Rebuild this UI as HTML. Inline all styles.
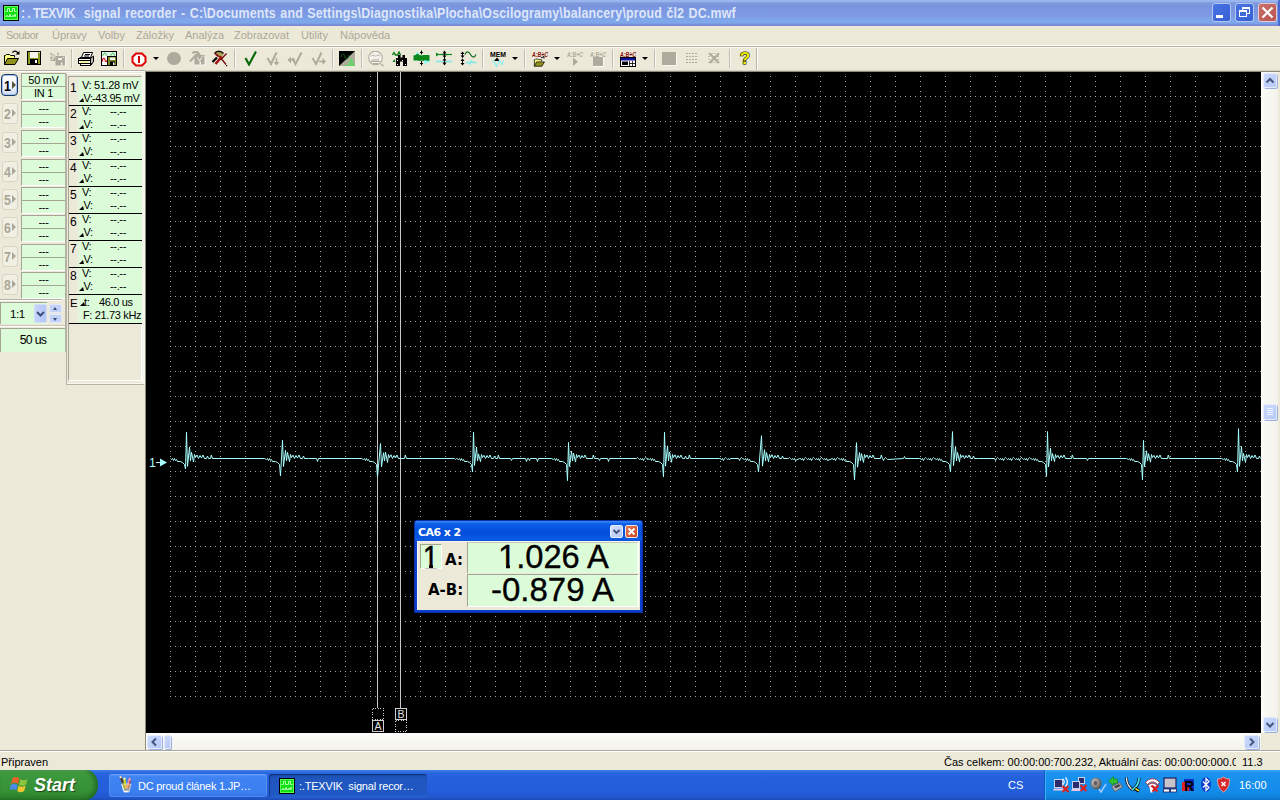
<!DOCTYPE html>
<html lang="cs">
<head>
<meta charset="utf-8">
<title>TEXVIK signal recorder</title>
<style>
html,body{margin:0;padding:0;}
body{width:1280px;height:800px;overflow:hidden;position:relative;background:#ece9d8;font-family:"Liberation Sans","DejaVu Sans",sans-serif;font-size:11px;color:#000;}
div,span{box-sizing:border-box;}
.a{position:absolute;}
#titlebar{position:absolute;left:0;top:0;width:1280px;height:26px;background:linear-gradient(to bottom,#9ab7f1 0px,#98b4ef 1.5px,#7f9adb 3px,#7994dc 6px,#7b97e1 8px,#7c99e2 14px,#7ea2e6 18px,#7fa9ec 21px,#7ea7ea 23px,#7b8edc 24.5px,#7a86d4 26px);}
#title{position:absolute;left:21px;top:4px;font-weight:bold;font-size:14px;color:#dde6f9;white-space:nowrap;line-height:18px;transform:scaleX(0.89);transform-origin:0 0;word-spacing:0.9px;letter-spacing:0.16px;}
.menu{position:absolute;top:28px;font-size:11px;color:#aca899;white-space:nowrap;line-height:14px;}
#tbline1{position:absolute;left:0;top:46px;width:1280px;height:1px;background:#b4b1a2;}
#tbline2{position:absolute;left:0;top:45px;width:1280px;height:1px;background:#fff;box-shadow:0 2px 0 #f8f7f2;}
.sep{position:absolute;top:49px;width:1px;height:19px;background:#c5c2b2;}
.ico{position:absolute;top:50px;width:16px;height:16px;}
.dd{position:absolute;top:57px;width:0;height:0;border-left:3px solid transparent;border-right:3px solid transparent;border-top:3px solid #000;}
#scope{position:absolute;left:146px;top:72px;width:1115px;height:661px;background:#000;overflow:hidden;}
#statusbar{position:absolute;left:0;top:751px;width:1280px;height:19px;background:#ece9d8;}
#taskbar{position:absolute;left:0;top:770px;width:1280px;height:30px;background:linear-gradient(to bottom,#3d7fe6 0px,#2a66de 3px,#2560db 8px,#245edb 20px,#2258d0 27px,#1d4cb8 30px);}
.fld{position:absolute;left:21px;width:44px;height:13px;background:#dcfcd9;border-left:1px solid #a5a595;border-top:1px solid #a5a595;text-align:center;font-size:11px;line-height:12px;white-space:nowrap;letter-spacing:-0.3px;}
.chb{position:absolute;left:2px;width:16px;height:21px;border:1px solid #d8d5c6;border-radius:3px;background:#f0ede0;color:#aca899;font-weight:bold;font-size:14px;line-height:19px;letter-spacing:-1px;padding-left:0px;white-space:nowrap;overflow:hidden;}
.rd{position:absolute;left:69px;width:73px;height:26px;background:linear-gradient(to right,#ece9d8 0px,#ece9d8 7px,#dcfcd9 12px);border-bottom:1px solid #000;font-size:11px;white-space:nowrap;letter-spacing:-0.35px;}
.rd .n{position:absolute;left:1px;top:1px;font-size:12px;line-height:14px;}
.rd .l1{position:absolute;left:13px;top:-1px;line-height:13px;}
.rd .l2{position:absolute;left:14.5px;top:12px;line-height:13px;}
.rd .v1{position:absolute;left:34px;width:30px;top:-1px;line-height:13px;text-align:center;}
.rd .v2{position:absolute;left:34px;width:30px;top:12px;line-height:13px;text-align:center;}
.tri{position:absolute;width:0;height:0;border-left:4px solid transparent;border-right:1px solid transparent;border-bottom:4px solid #000;}
</style>
</head>
<body>
<div id="titlebar"></div>
<svg class="a" style="left:3px;top:5px" width="16" height="16" viewBox="0 0 16 16"><rect x="0.5" y="0.5" width="15" height="15" fill="#10e010" stroke="#000"/><rect x="1.5" y="1.5" width="13" height="13" fill="none" stroke="#60ff60" stroke-width="1"/><path d="M2.5 6.5h2v-3h2v3h3v-3h2v3h2M2.5 11.5h1v-1h1v1h2v-2h1v2h2v-1h1v1h1v-2h1v2" fill="none" stroke="#b0ffb0" stroke-width="1"/></svg>
<div id="title"><span style="letter-spacing:2.5px">:.</span><span style="letter-spacing:-0.6px">TEXVIK</span>&nbsp; signal recorder - C:\Documents and Settings\Diagnostika\Plocha\Oscilogramy\balancery\proud čl2 DC.mwf</div>
<div class="a" style="left:1212px;top:3px;width:19px;height:19px;border:1px solid #b4c6f2;border-radius:3px;background:linear-gradient(135deg,#4a74e2,#345fd4);"></div><div class="a" style="left:1235px;top:3px;width:19px;height:19px;border:1px solid #b4c6f2;border-radius:3px;background:linear-gradient(135deg,#4a74e2,#345fd4);"></div><div class="a" style="left:1258px;top:3px;width:19px;height:19px;border:1px solid #e8c8cc;border-radius:3px;background:linear-gradient(135deg,#c9706a,#b85652);"></div><div class="a" style="left:1216px;top:15px;width:7px;height:3px;background:#fff"></div><div class="a" style="left:1242px;top:7px;width:8px;height:7px;border:1px solid #fff;border-top-width:2px"></div><div class="a" style="left:1239px;top:10px;width:8px;height:7px;border:1px solid #fff;border-top-width:2px;background:#3f69da"></div><svg class="a" style="left:1258px;top:3px" width="19" height="19" viewBox="0 0 19 19"><path d="M4.500 4.500l10 10M14.500 4.500l-10 10" stroke="#fff" stroke-width="2.200" fill="none"/></svg>
<div class="a" style="left:1278px;top:0;width:2px;height:26px;background:#3e5fd0;opacity:0.800"></div><div class="menu" style="left:6px;letter-spacing:-0.5px">Soubor</div><div class="menu" style="left:52px">Úpravy</div><div class="menu" style="left:98px">Volby</div><div class="menu" style="left:136px">Záložky</div><div class="menu" style="left:185px">Analýza</div><div class="menu" style="left:234px">Zobrazovat</div><div class="menu" style="left:301px">Utility</div><div class="menu" style="left:340px">Nápověda</div>
<div id="tbline1"></div><div id="tbline2"></div>
<svg class="a" style="left:4px;top:50px" width="16" height="16" viewBox="0 0 16 16" ><path d="M8.500 2.500c1.500-2 4-2 5.500 0.500" fill="none" stroke="#000" stroke-width="1.300"/><path d="M11.500 4.500h4v-3.500z" fill="#000"/><g transform="translate(0,1) scale(1)"><path d="M0.5 13.5V4.5h1l1-1h3l1 1h4v2" fill="#ffff80" stroke="#000"/><path d="M0.5 13.5l3-6h11l-3.5 6z" fill="#90901c" stroke="#000"/></g></svg>
<svg class="a" style="left:27px;top:51px" width="14" height="14" viewBox="0 0 14 14" ><g transform="translate(0,0) scale(1)"><rect x="0.5" y="0.5" width="13" height="13" fill="#8a9a20" stroke="#000"/><rect x="3" y="1" width="8" height="6" fill="#f4f4ec"/><rect x="3" y="8" width="8" height="5" fill="#000"/><rect x="8" y="9" width="2" height="3" fill="#fff"/><rect x="12" y="1" width="1" height="1" fill="#fff"/></g></svg>
<svg class="a" style="left:50px;top:52px" width="16" height="14" viewBox="0 0 16 14" ><rect x="6.500" y="5" width="9.500" height="9.500" fill="#fbfaf5"/><rect x="5.500" y="4" width="9.500" height="9.500" fill="#aeab9d"/><rect x="8" y="6" width="4" height="2" fill="#f4f2ea"/><rect x="11" y="10.500" width="1.300" height="3" fill="#f4f2ea"/><rect x="13" y="5" width="1" height="1" fill="#f4f2ea"/><path d="M0.500 4.500h5v4.500h-5z" fill="#aeab9d"/><path d="M2 8l2-3.500" stroke="#f4f2ea" stroke-width="1.200"/><path d="M0 1l2 2h3" stroke="#aeab9d" stroke-width="1.200" fill="none"/><path d="M8 0.500v3" stroke="#aeab9d" stroke-width="1.300"/></svg>
<div class="a" style="left:71px;top:49px;width:1px;height:19px;background:#c2bfb0"></div><div class="a" style="left:72px;top:49px;width:1px;height:19px;background:#f8f7f1"></div>
<svg class="a" style="left:78px;top:52px" width="16" height="14" viewBox="0 0 16 14" ><path d="M5.500 0.500H14.500L12.500 5.500H3.500Z" fill="#fff" stroke="#000"/><path d="M7 2.500h5M6 4h5" stroke="#000" fill="none"/><path d="M12.500 6.500l3-2.500v6l-3 2.500z" fill="#b8b8b0" stroke="#000"/><path d="M1 6.500l2.500-1.500M12.500 6.500l1.500-1.500" stroke="#000"/><rect x="0.500" y="6.500" width="12" height="5" fill="#fff" stroke="#000"/><path d="M0.500 8.500h12" stroke="#000"/><rect x="2" y="9.300" width="9" height="1.400" fill="#eef088"/><rect x="2.500" y="11.500" width="10" height="2" fill="#fff" stroke="#000"/><path d="M12.500 13.500l2-2" stroke="#000"/></svg>
<svg class="a" style="left:101px;top:51px" width="16" height="15" viewBox="0 0 16 15" ><rect x="0.500" y="0.500" width="15" height="14" fill="#fff" stroke="#000"/><rect x="1" y="1" width="14" height="4" fill="#dff5df"/><path d="M2 4.500c0.500-3 3-3 3.500 0M10 4.500c0.500-3 3-3 3.500 0" fill="none" stroke="#20c040"/><path d="M1.500 10.500v-2c1.500-2 2.500-1 2.500 0.500s1.500 2.500 2.500 0" fill="none" stroke="#d81818" stroke-width="1.200"/><rect x="6.500" y="5.500" width="9" height="9" fill="#7c8a24" stroke="#000"/><rect x="9" y="6.500" width="5" height="2.500" fill="#f4f4ec"/><rect x="9" y="10.500" width="5" height="4" fill="#000"/><rect x="12" y="11.500" width="1.500" height="2.500" fill="#fff"/></svg>
<div class="a" style="left:123px;top:49px;width:1px;height:19px;background:#c2bfb0"></div><div class="a" style="left:124px;top:49px;width:1px;height:19px;background:#f8f7f1"></div>
<svg class="a" style="left:131px;top:52px" width="16" height="15" viewBox="0 0 16 15" ><path d="M5 1.500h6l3.500 3.500v5l-3.500 3.500h-6l-3.500-3.500v-5z" fill="#fff" stroke="#e00000" stroke-width="2"/><rect x="7" y="4" width="2" height="7" fill="#d00000"/></svg>
<div class="a" style="left:153px;top:57px;width:0;height:0;border-left:3px solid transparent;border-right:3px solid transparent;border-top:3px solid #000"></div>
<div class="a" style="left:167px;top:52px;width:14px;height:13px;border-radius:7px;background:#aeab9d"></div>
<svg class="a" style="left:189px;top:51px" width="17" height="15" viewBox="0 0 17 15" ><path d="M3.500 2.500c2-2.500 4.500-2.500 6.500 0.500l1 2" fill="none" stroke="#aeab9d" stroke-width="2.200"/><path d="M8.500 2.500l-7.500 8" stroke="#aeab9d" stroke-width="2"/><rect x="6.500" y="5" width="10" height="9.500" fill="#f8f7f1"/><rect x="5.500" y="4" width="10" height="9.500" fill="#aeab9d"/><path d="M8 5.500l2.500 3.500 2.500-3.500v1.500l-2.500 3.500-2.500-3.500z" fill="#f4f2ea"/><rect x="10.500" y="10.500" width="1.500" height="3" fill="#f4f2ea"/><rect x="13.500" y="5" width="1" height="1" fill="#f4f2ea"/></svg>
<svg class="a" style="left:211px;top:50px" width="17" height="17" viewBox="0 0 17 17" ><path d="M4 4c1-3 6-3.500 8.500-0.500l-1 3h-4z" fill="#a8a458"/><path d="M3.500 3.500c2-3 6.500-3 9 0" fill="none" stroke="#1a0a0a" stroke-width="1.400"/><path d="M4 3.500l3 2.500 4 1.500" fill="none" stroke="#8a1010" stroke-width="1.800"/><path d="M1.500 12l4.500-4.500" stroke="#0a0505" stroke-width="2.300"/><path d="M4.500 14l6-7" stroke="#a01212" stroke-width="2.600"/><path d="M15.500 3.500l-6 6.500" stroke="#700808" stroke-width="1.300"/><path d="M11 9.500l4 5" stroke="#700808" stroke-width="1.300"/><rect x="15" y="15" width="1.200" height="1.200" fill="#200"/></svg>
<div class="a" style="left:234px;top:49px;width:1px;height:19px;background:#c2bfb0"></div><div class="a" style="left:235px;top:49px;width:1px;height:19px;background:#f8f7f1"></div>
<svg class="a" style="left:244px;top:50px" width="14" height="16" viewBox="0 0 14 16" ><path d="M1.500 8l3.500 6.500L12 1.500" fill="none" stroke="#0a6a0a" stroke-width="2.200"/></svg>
<svg class="a" style="left:266px;top:50px" width="15" height="16" viewBox="0 0 15 16" ><path d="M1.500 8l3.500 6L10.500 2.500" fill="none" stroke="#aeab9d" stroke-width="2"/><path d="M10.500 8v5" stroke="#aeab9d" stroke-width="1.500"/><path d="M7.500 12h6l-3 3.500z" fill="#aeab9d"/></svg>
<svg class="a" style="left:287px;top:50px" width="16" height="16" viewBox="0 0 16 16" ><path d="M5.500 8l3 6L14.500 2.500" fill="none" stroke="#aeab9d" stroke-width="2"/><path d="M3 10h5" stroke="#aeab9d" stroke-width="1.500"/><path d="M4 6.500v7l-3.500-3.500z" fill="#aeab9d"/></svg>
<svg class="a" style="left:311px;top:50px" width="16" height="16" viewBox="0 0 16 16" ><path d="M1.500 8l3.500 6L10.500 2.500" fill="none" stroke="#aeab9d" stroke-width="2"/><path d="M8 11.500h4" stroke="#aeab9d" stroke-width="1.500"/><path d="M11.500 8v7l3.500-3.500z" fill="#aeab9d"/></svg>
<div class="a" style="left:332px;top:49px;width:1px;height:19px;background:#c2bfb0"></div><div class="a" style="left:333px;top:49px;width:1px;height:19px;background:#f8f7f1"></div>
<svg class="a" style="left:339px;top:51px" width="16" height="15" viewBox="0 0 16 15" ><rect x="0" y="0" width="16" height="15" fill="#b0ad9d"/><path d="M0 0h16L0 15z" fill="#000"/><path d="M8 15l4.500-9 3.500 9z" fill="#6fcf6f"/><path d="M2 6c1-4 3-4 4 0s3 2 4-2" fill="none" stroke="#1a6a1a"/><rect x="5" y="14" width="11" height="1.500" fill="#6fcf6f"/></svg>
<div class="a" style="left:361px;top:49px;width:1px;height:19px;background:#c2bfb0"></div><div class="a" style="left:362px;top:49px;width:1px;height:19px;background:#f8f7f1"></div>
<svg class="a" style="left:368px;top:51px" width="17" height="16" viewBox="0 0 17 16" ><circle cx="7.500" cy="7" r="6.800" fill="#f6f4ec" stroke="#aeab9d" stroke-width="1.100"/><path d="M3 5.500c1-2 2.500-2 3.500-0.500h2c1-1.500 2.500-1.500 3.500 0.500" fill="none" stroke="#aeab9d"/><path d="M4 10.500v-2M6 10.500v-3M8 10.500v-2.500M10 10.500v-3M3 10.500h9M5 12.500h5" stroke="#aeab9d" fill="none"/><path d="M13 13l2.500 2" stroke="#aeab9d" stroke-width="1.500"/></svg>
<svg class="a" style="left:392px;top:51px" width="16" height="16" viewBox="0 0 16 16" ><path d="M0.500 4l1.500-2.500 1.500 2.500h2l1.500-3 1.500 3" fill="none" stroke="#0a7a1a" stroke-width="1.400"/><path d="M0.500 11l2-3 1 3z" fill="#0a7a1a"/><path d="M6 4h2.500v2.500h2v-2.500h2.500v3h2v8h-4v-4.500h-3v4.500h-4v-8h2z" fill="#000"/><rect x="5" y="9" width="1" height="1" fill="#fff"/><rect x="10" y="9" width="1" height="1" fill="#fff"/><rect x="5" y="13" width="1" height="1" fill="#fff"/><rect x="13" y="13" width="1" height="1" fill="#fff"/></svg>
<svg class="a" style="left:413px;top:50px" width="17" height="16" viewBox="0 0 17 16" ><path d="M2 5l2.500-3.500 2 3.500z" fill="#8ff"/><path d="M10 10.500l2.500 4 2-2.500 2 1v-3z" fill="#8ff"/><path d="M0.500 5.500l2-0.500 2-1.500 2 1.500 2 0.500 2-0.500h6v5.500l-2 0.500-2-1-2 1-2-0.500-2 0.500-2-0.500h-4z" fill="#0a8a1a"/><path d="M8.5 0.500v4M8.5 11v4.500" stroke="#000" fill="none"/><path d="M7 2.500h3M7 13.500h3" stroke="#000" stroke-width="1.200"/></svg>
<svg class="a" style="left:436px;top:50px" width="17" height="16" viewBox="0 0 17 16" ><path d="M0 4.500h16" stroke="#0a8a1a" stroke-width="1.200"/><path d="M0 2.500l3 2-3 2z" fill="#0a8a1a"/><path d="M0 11.500h16" stroke="#7fe8e8" stroke-width="1.500"/><path d="M8.5 1v14" stroke="#000" fill="none"/><path d="M6.5 3.500l2-3 2 3zM6.5 5.500l2 2.500 2-2.500zM6.5 12.500l2 3 2-3zM6.5 10.500l2-2.500 2 2.500z" fill="#000"/></svg>
<svg class="a" style="left:460px;top:50px" width="17" height="16" viewBox="0 0 17 16" ><path d="M5 4.500c1.500-3.500 3.500-3.500 5.500 0s4 3.500 5.500 0" fill="none" stroke="#0a6a1a" stroke-width="1.200"/><path d="M5.500 12.500h3l1.500 1.500 1-3 1.500 1.500h4" fill="none" stroke="#7fe8e8" stroke-width="1.500"/><path d="M2.500 2v5.500M2.500 9v6" stroke="#000"/><path d="M0.500 4l2-2.500 2 2.500zM0.500 5.500l2 2.500 2-2.500zM0.500 11l2-2.500 2 2.500zM0.500 13l2 2.500 2-2.500z" fill="#000"/></svg>
<div class="a" style="left:482px;top:49px;width:1px;height:19px;background:#c2bfb0"></div><div class="a" style="left:483px;top:49px;width:1px;height:19px;background:#f8f7f1"></div>
<svg class="a" style="left:490px;top:51px" width="17" height="16" viewBox="0 0 17 16" ><text x="0" y="5.500" font-size="6.500" font-family="Liberation Sans,sans-serif" font-weight="bold" fill="#000" textLength="16" lengthAdjust="spacingAndGlyphs">MEM</text><path d="M4 10l3-3.500 3 3.500z" fill="#000"/><path d="M3 8.500l3.500 7 3-6 2.500 4 1.500-4" fill="none" stroke="#8fefef" stroke-width="1.300"/></svg>
<div class="a" style="left:512px;top:57px;width:0;height:0;border-left:3px solid transparent;border-right:3px solid transparent;border-top:3px solid #000"></div>
<div class="a" style="left:524px;top:49px;width:1px;height:19px;background:#c2bfb0"></div><div class="a" style="left:525px;top:49px;width:1px;height:19px;background:#f8f7f1"></div>
<svg class="a" style="left:532px;top:51px" width="17" height="16" viewBox="0 0 17 16" ><text x="0" y="5.5" font-size="6.5" font-family="Liberation Sans,sans-serif" font-weight="bold" fill="#8a1010" textLength="16" lengthAdjust="spacingAndGlyphs" font-style="italic">A:B+C</text><path d="M9 7l3-1.500M12 5.500v2" stroke="#000" fill="none"/><g transform="translate(2,5.5) scale(0.72)"><path d="M0.5 13.5V4.5h1l1-1h3l1 1h4v2" fill="#ffff80" stroke="#000"/><path d="M0.5 13.5l3-6h11l-3.5 6z" fill="#90901c" stroke="#000"/></g></svg>
<div class="a" style="left:554px;top:57px;width:0;height:0;border-left:3px solid transparent;border-right:3px solid transparent;border-top:3px solid #000"></div>
<svg class="a" style="left:567px;top:51px" width="17" height="16" viewBox="0 0 17 16" ><text x="0" y="5.5" font-size="6.5" font-family="Liberation Sans,sans-serif" font-weight="bold" fill="#aeab9d" textLength="16" lengthAdjust="spacingAndGlyphs" font-style="italic">A:B+C</text><path d="M6 6.500v8.500l5-4.200z" fill="#aeab9d"/></svg>
<svg class="a" style="left:590px;top:51px" width="17" height="16" viewBox="0 0 17 16" ><text x="0" y="5.5" font-size="6.5" font-family="Liberation Sans,sans-serif" font-weight="bold" fill="#aeab9d" textLength="16" lengthAdjust="spacingAndGlyphs" font-style="italic">A:B+C</text><rect x="3" y="6" width="10" height="9" fill="#aeab9d"/><path d="M3.500 15.500h10v-9" stroke="#fbfaf5" fill="none"/></svg>
<div class="a" style="left:612px;top:49px;width:1px;height:19px;background:#c2bfb0"></div><div class="a" style="left:613px;top:49px;width:1px;height:19px;background:#f8f7f1"></div>
<svg class="a" style="left:620px;top:51px" width="17" height="16" viewBox="0 0 17 16" ><text x="0" y="5.5" font-size="6.5" font-family="Liberation Sans,sans-serif" font-weight="bold" fill="#8a1010" textLength="16" lengthAdjust="spacingAndGlyphs" font-style="italic">A:B+C</text><rect x="0.500" y="6.500" width="15" height="9" fill="#fff" stroke="#000"/><rect x="1" y="7" width="14" height="2.500" fill="#1010a0"/><rect x="2" y="10.500" width="6" height="3.500" fill="#000"/><path d="M9.500 10v5M12.500 10v5M9 12.500h6" stroke="#000" stroke-width="0.800"/></svg>
<div class="a" style="left:642px;top:57px;width:0;height:0;border-left:3px solid transparent;border-right:3px solid transparent;border-top:3px solid #000"></div>
<div class="a" style="left:654px;top:49px;width:1px;height:19px;background:#c2bfb0"></div><div class="a" style="left:655px;top:49px;width:1px;height:19px;background:#f8f7f1"></div>
<div class="a" style="left:662px;top:52px;width:14px;height:13px;background:#aeab9d;box-shadow:1px 1px 0 #fbfaf5"></div>
<svg class="a" style="left:686px;top:52px" width="13" height="13" viewBox="0 0 13 13" ><path d="M0 1.500h12M0 4.500h12M0 7.500h12M0 10.500h12" stroke="#aeab9d" stroke-dasharray="2 1" fill="none"/></svg>
<svg class="a" style="left:708px;top:52px" width="14" height="13" viewBox="0 0 14 13" ><path d="M0 1.500h12M0 10.500h12M0 4.500h12M0 7.500h12" stroke="#aeab9d" stroke-dasharray="2 1" fill="none" opacity="0.700"/><path d="M1.500 1.500l9.500 9.500M11 1.500l-9.500 9.500" stroke="#aeab9d" stroke-width="2"/></svg>
<div class="a" style="left:729px;top:49px;width:1px;height:19px;background:#c2bfb0"></div><div class="a" style="left:730px;top:49px;width:1px;height:19px;background:#f8f7f1"></div>
<svg class="a" style="left:739px;top:50px" width="12" height="16" viewBox="0 0 12 16" ><text x="6" y="14" text-anchor="middle" font-size="17" font-family="Liberation Sans,sans-serif" font-weight="bold" fill="#f0f000" stroke="#000" stroke-width="1.100" paint-order="stroke">?</text></svg>
<div class="a" style="left:756px;top:48px;width:1px;height:22px;background:#b9b6a6"></div><div class="a" style="left:757px;top:48px;width:1px;height:22px;background:#fff"></div>
<div class="a" style="left:0;top:72px;width:146px;height:679px;background:#ece9d8"></div>
<div class="a" style="left:1px;top:74px;width:17px;height:22px;border:1px solid #16386b;border-radius:4px;background:linear-gradient(to bottom,#ffffff 0%,#f4f7fc 50%,#cfdcf3 100%);box-shadow:inset 0 0 0 1px #a9c0e8;"></div>
<div class="a" style="left:4px;top:77px;font-weight:bold;font-size:15px;line-height:17px;color:#000;transform:scaleX(0.82);transform-origin:0 0;">1</div>
<div class="a" style="left:12px;top:81px;width:0;height:0;border-top:4px solid transparent;border-bottom:4px solid transparent;border-left:4px solid #55553a;"></div>
<div class="fld" style="top:73px">50 mV</div>
<div class="fld" style="top:86px;height:14px;border-bottom:1px solid #fff">IN 1</div>
<div class="a" style="left:2px;top:103px;width:16px;height:21px;border:1px solid #d9d6c8;border-radius:3px;background:#f1eee2;"></div>
<div class="a" style="left:4px;top:105px;font-weight:bold;font-size:15px;line-height:17px;color:#aba798;transform:scaleX(0.82);transform-origin:0 0;">2</div>
<div class="a" style="left:12px;top:109px;width:0;height:0;border-top:4px solid transparent;border-bottom:4px solid transparent;border-left:4px solid #aba798;"></div>
<div class="fld" style="top:101px">---</div>
<div class="fld" style="top:114px;height:14px;border-bottom:1px solid #fff">---</div>
<div class="a" style="left:2px;top:132px;width:16px;height:21px;border:1px solid #d9d6c8;border-radius:3px;background:#f1eee2;"></div>
<div class="a" style="left:4px;top:134px;font-weight:bold;font-size:15px;line-height:17px;color:#aba798;transform:scaleX(0.82);transform-origin:0 0;">3</div>
<div class="a" style="left:12px;top:138px;width:0;height:0;border-top:4px solid transparent;border-bottom:4px solid transparent;border-left:4px solid #aba798;"></div>
<div class="fld" style="top:130px">---</div>
<div class="fld" style="top:143px;height:14px;border-bottom:1px solid #fff">---</div>
<div class="a" style="left:2px;top:161px;width:16px;height:21px;border:1px solid #d9d6c8;border-radius:3px;background:#f1eee2;"></div>
<div class="a" style="left:4px;top:163px;font-weight:bold;font-size:15px;line-height:17px;color:#aba798;transform:scaleX(0.82);transform-origin:0 0;">4</div>
<div class="a" style="left:12px;top:167px;width:0;height:0;border-top:4px solid transparent;border-bottom:4px solid transparent;border-left:4px solid #aba798;"></div>
<div class="fld" style="top:159px">---</div>
<div class="fld" style="top:172px;height:14px;border-bottom:1px solid #fff">---</div>
<div class="a" style="left:2px;top:189px;width:16px;height:21px;border:1px solid #d9d6c8;border-radius:3px;background:#f1eee2;"></div>
<div class="a" style="left:4px;top:191px;font-weight:bold;font-size:15px;line-height:17px;color:#aba798;transform:scaleX(0.82);transform-origin:0 0;">5</div>
<div class="a" style="left:12px;top:195px;width:0;height:0;border-top:4px solid transparent;border-bottom:4px solid transparent;border-left:4px solid #aba798;"></div>
<div class="fld" style="top:187px">---</div>
<div class="fld" style="top:200px;height:14px;border-bottom:1px solid #fff">---</div>
<div class="a" style="left:2px;top:217px;width:16px;height:21px;border:1px solid #d9d6c8;border-radius:3px;background:#f1eee2;"></div>
<div class="a" style="left:4px;top:219px;font-weight:bold;font-size:15px;line-height:17px;color:#aba798;transform:scaleX(0.82);transform-origin:0 0;">6</div>
<div class="a" style="left:12px;top:223px;width:0;height:0;border-top:4px solid transparent;border-bottom:4px solid transparent;border-left:4px solid #aba798;"></div>
<div class="fld" style="top:215px">---</div>
<div class="fld" style="top:228px;height:14px;border-bottom:1px solid #fff">---</div>
<div class="a" style="left:2px;top:246px;width:16px;height:21px;border:1px solid #d9d6c8;border-radius:3px;background:#f1eee2;"></div>
<div class="a" style="left:4px;top:248px;font-weight:bold;font-size:15px;line-height:17px;color:#aba798;transform:scaleX(0.82);transform-origin:0 0;">7</div>
<div class="a" style="left:12px;top:252px;width:0;height:0;border-top:4px solid transparent;border-bottom:4px solid transparent;border-left:4px solid #aba798;"></div>
<div class="fld" style="top:244px">---</div>
<div class="fld" style="top:257px;height:14px;border-bottom:1px solid #fff">---</div>
<div class="a" style="left:2px;top:274px;width:16px;height:21px;border:1px solid #d9d6c8;border-radius:3px;background:#f1eee2;"></div>
<div class="a" style="left:4px;top:276px;font-weight:bold;font-size:15px;line-height:17px;color:#aba798;transform:scaleX(0.82);transform-origin:0 0;">8</div>
<div class="a" style="left:12px;top:280px;width:0;height:0;border-top:4px solid transparent;border-bottom:4px solid transparent;border-left:4px solid #aba798;"></div>
<div class="fld" style="top:272px">---</div>
<div class="fld" style="top:285px;height:14px;border-bottom:1px solid #fff">---</div>
<div class="a" style="left:65px;top:73px;width:1px;height:279px;background:#b5b3a3"></div>
<div class="a" style="left:0;top:299px;width:62px;height:1px;background:#b5b3a3"></div><div class="a" style="left:0;top:300px;width:62px;height:1px;background:#fff"></div>
<div class="a" style="left:0;top:302px;width:47px;height:22px;background:#dcfcd9;border-top:1px solid #a5a595;border-left:1px solid #a5a595;"></div>
<div class="a" style="left:10px;top:307px;font-size:11.5px;line-height:14px;letter-spacing:-0.4px;">1:1</div>
<div class="a" style="left:34px;top:304px;width:13px;height:19px;border-radius:2px;background:linear-gradient(to right,#c6d4fa,#b3c6f6);border:1px solid #d4defb;"></div>
<svg class="a" style="left:34px;top:304px" width="13" height="19" viewBox="0 0 13 19"><path d="M3 8l3.5 3.5L10 8" fill="none" stroke="#3b4f7e" stroke-width="2"/></svg>
<div class="a" style="left:49px;top:304px;width:13px;height:9px;border-radius:2px;background:#c3d2f9;border:1px solid #e2e9fc;"></div>
<div class="a" style="left:49px;top:314px;width:13px;height:9px;border-radius:2px;background:#c3d2f9;border:1px solid #e2e9fc;"></div>
<div class="a" style="left:53px;top:307px;width:0;height:0;border-left:2.5px solid transparent;border-right:2.5px solid transparent;border-bottom:3px solid #3b4f7e"></div>
<div class="a" style="left:53px;top:318px;width:0;height:0;border-left:2.5px solid transparent;border-right:2.5px solid transparent;border-top:3px solid #3b4f7e"></div>
<div class="a" style="left:0;top:325px;width:65px;height:1px;background:#c9c6b6"></div><div class="a" style="left:0;top:326px;width:65px;height:1px;background:#fff"></div>
<div class="a" style="left:0;top:328px;width:65px;height:24px;background:#dcfcd9;border-left:1px solid #a5a595;border-top:1px solid #a5a595;text-align:center;font-size:12.3px;line-height:23px;letter-spacing:-0.7px;">50 us</div>
<div class="a" style="left:66px;top:73px;width:79px;height:312px;border-left:1px solid #b5b3a3;border-top:1px solid #fff;border-right:1px solid #fff;border-bottom:1px solid #b5b3a3;box-shadow:inset 0 -1px 0 #f8f7f2"></div>
<div class="a" style="left:68px;top:76px;width:74px;height:305px;border-left:1px solid #a5a595;border-top:1px solid #a5a595;border-right:1px solid #fff;border-bottom:1px solid #fff;"></div>
<div class="a" style="left:142px;top:74px;width:3px;height:310px;background:#f6f5ee"></div>
<div class="rd" style="top:78px;height:28px"><span class="n" style="top:3px">1</span><span class="l1" style="top:1px">V:</span><span class="l2" style="top:14px">V:</span><span class="a" style="left:25px;top:1px;line-height:13px;">51.28 mV</span><span class="a" style="left:23px;top:14px;line-height:13px;">-43.95 mV</span><span class="tri" style="left:10px;top:20px"></span></div>
<div class="rd" style="top:106px;height:27px"><span class="n">2</span><span class="l1">V:</span><span class="l2">V:</span><span class="v1">--.--</span><span class="v2">--.--</span><span class="tri" style="left:10px;top:19px"></span></div>
<div class="rd" style="top:133px;height:27px"><span class="n">3</span><span class="l1">V:</span><span class="l2">V:</span><span class="v1">--.--</span><span class="v2">--.--</span><span class="tri" style="left:10px;top:19px"></span></div>
<div class="rd" style="top:160px;height:27px"><span class="n">4</span><span class="l1">V:</span><span class="l2">V:</span><span class="v1">--.--</span><span class="v2">--.--</span><span class="tri" style="left:10px;top:19px"></span></div>
<div class="rd" style="top:187px;height:27px"><span class="n">5</span><span class="l1">V:</span><span class="l2">V:</span><span class="v1">--.--</span><span class="v2">--.--</span><span class="tri" style="left:10px;top:19px"></span></div>
<div class="rd" style="top:214px;height:27px"><span class="n">6</span><span class="l1">V:</span><span class="l2">V:</span><span class="v1">--.--</span><span class="v2">--.--</span><span class="tri" style="left:10px;top:19px"></span></div>
<div class="rd" style="top:241px;height:27px"><span class="n">7</span><span class="l1">V:</span><span class="l2">V:</span><span class="v1">--.--</span><span class="v2">--.--</span><span class="tri" style="left:10px;top:19px"></span></div>
<div class="rd" style="top:268px;height:27px"><span class="n">8</span><span class="l1">V:</span><span class="l2">V:</span><span class="v1">--.--</span><span class="v2">--.--</span><span class="tri" style="left:10px;top:19px"></span></div>
<div class="rd" style="top:295px;height:29px"><span class="n" style="top:1px;font-size:11.5px">E</span><span class="a" style="left:30px;top:0px;line-height:14px;">46.0 us</span><span class="a" style="left:14px;top:13px;line-height:14px;">F: 21.73 kHz</span><span class="tri" style="left:11px;top:7px"></span><span class="a" style="left:15px;top:0px;line-height:14px;">t:</span></div>
<div class="a" style="left:0;top:70px;width:145px;height:1px;background:#b5b2a3"></div><div class="a" style="left:0;top:71px;width:145px;height:1px;background:#fff"></div><div class="a" style="left:145px;top:70px;width:1135px;height:1px;background:#d6d3c4"></div><div class="a" style="left:145px;top:71px;width:1px;height:680px;background:#8d8b7d"></div><div class="a" style="left:145px;top:71px;width:1135px;height:1px;background:#8d8b7d"></div><div id="scope"><svg class="a" style="left:0;top:0" width="1115" height="661" viewBox="146 72 1115 661" shape-rendering="crispEdges"><defs><pattern id="gd" x="170" y="96" width="25" height="25" patternUnits="userSpaceOnUse"><rect x="0" y="0" width="1" height="1" fill="#a6a6a6"/><rect x="5" y="0" width="1" height="1" fill="#a6a6a6"/><rect x="10" y="0" width="1" height="1" fill="#a6a6a6"/><rect x="15" y="0" width="1" height="1" fill="#a6a6a6"/><rect x="20" y="0" width="1" height="1" fill="#a6a6a6"/><rect x="0" y="5" width="1" height="1" fill="#a6a6a6"/><rect x="0" y="10" width="1" height="1" fill="#a6a6a6"/><rect x="0" y="15" width="1" height="1" fill="#a6a6a6"/><rect x="0" y="20" width="1" height="1" fill="#a6a6a6"/></pattern></defs><rect x="170" y="72" width="1091" height="625" fill="url(#gd)"/><rect x="377" y="72" width="1" height="636" fill="#c8c8c8"/><rect x="400" y="72" width="1" height="636" fill="#c8c8c8"/><polyline points="170.5,458.5 171.5,459.5 172.5,458.5 173.5,460.5 174.5,458.5 175.5,460.5 176.5,459.5 177.5,461.5 180.5,461.5 182.5,462.5 184.5,464.5 185.5,469.0 186.5,432.0 187.5,466.4 189.5,446.9 190.5,461.0 191.5,452.2 193.5,462.0 194.5,454.5 195.5,457.5 197.0,455.0 198.5,458.5 200.0,455.5 201.5,458.0 203.0,455.0 204.5,458.5 206.5,458.5 207.5,456.0 208.5,458.5 210.5,458.5 211.3,455.0 212.5,458.5 264.5,458.5 266.5,459.5 267.5,458.5 268.5,460.5 269.5,458.5 270.5,460.5 271.5,459.5 272.5,461.5 275.5,461.5 277.5,462.5 279.5,464.5 280.5,476.0 282.5,440.0 283.5,466.5 285.5,450.3 286.5,461.0 287.5,452.4 289.5,461.6 290.5,454.5 291.5,457.5 293.0,455.2 294.5,458.5 296.0,455.5 297.5,458.0 299.0,455.0 300.5,458.5 302.5,458.5 303.5,456.0 304.5,458.5 308.5,458.5 316.5,458.5 317.5,461.5 318.5,458.5 361.5,458.5 363.5,459.5 364.5,458.5 365.5,460.5 366.5,458.5 367.5,460.5 368.5,459.5 369.5,461.5 372.5,461.5 374.5,462.5 376.5,464.5 377.5,477.0 380.5,443.5 381.5,466.9 383.5,452.7 384.5,461.0 385.5,452.0 387.5,462.5 388.5,454.5 389.5,457.5 391.0,454.8 392.5,458.5 394.0,455.5 395.5,458.0 397.0,455.0 398.5,458.5 404.5,458.5 405.3,455.0 406.5,458.5 454.5,458.5 455.5,459.5 456.5,458.5 456.5,458.5 458.5,459.5 459.5,458.5 460.5,460.5 461.5,458.5 462.5,460.5 463.5,459.5 464.5,461.5 467.5,461.5 469.5,462.5 471.5,464.5 472.5,472.0 473.5,432.0 474.5,465.5 476.5,447.0 477.5,461.0 478.5,453.9 480.5,461.7 481.5,454.5 482.5,457.5 484.0,455.3 485.5,458.5 487.0,455.5 488.5,458.0 490.0,455.0 491.5,458.5 493.5,458.5 494.5,456.0 495.5,458.5 497.5,458.5 498.3,455.0 499.5,458.5 510.5,458.5 511.5,460.5 512.5,458.5 525.5,458.5 526.5,461.5 527.5,458.5 528.5,458.5 529.5,460.5 530.5,458.5 536.5,458.5 537.5,461.5 538.5,458.5 551.5,458.5 553.5,459.5 554.5,458.5 555.5,460.5 556.5,458.5 557.5,460.5 558.5,459.5 559.5,461.5 562.5,461.5 564.5,462.5 566.5,464.5 567.5,480.7 568.5,442.4 569.5,466.4 571.5,451.0 572.5,461.0 573.5,453.0 575.5,462.1 576.5,454.5 577.5,457.5 579.0,455.0 580.5,458.5 582.0,455.5 583.5,458.0 585.0,455.0 586.5,458.5 592.5,458.5 593.3,455.0 594.5,458.5 598.5,458.5 599.5,460.5 600.5,458.5 607.5,458.5 608.5,461.5 609.5,458.5 636.5,458.5 637.5,457.5 638.5,458.5 639.5,459.5 640.5,458.5 641.5,460.0 642.5,458.5 643.5,460.5 644.5,458.5 645.5,457.5 646.5,458.5 647.5,459.5 647.5,458.5 649.5,459.5 650.5,458.5 651.5,460.5 652.5,458.5 653.5,460.5 654.5,459.5 655.5,461.5 658.5,461.5 660.5,462.5 662.5,464.5 663.5,477.0 664.5,432.0 665.5,466.1 667.5,445.8 668.5,461.0 669.5,452.0 671.5,462.3 672.5,454.5 673.5,457.5 675.0,454.8 676.5,458.5 678.0,455.5 679.5,458.0 681.0,455.0 682.5,458.5 684.5,458.5 685.5,456.0 686.5,458.5 688.5,458.5 689.3,455.0 690.5,458.5 719.5,458.5 720.5,458.5 721.5,460.0 722.5,458.5 723.5,460.5 724.5,458.5 725.5,457.5 726.5,458.5 727.5,459.5 728.5,458.5 729.5,460.0 730.5,458.5 738.5,458.5 739.5,460.5 740.5,458.5 741.5,457.5 742.5,458.5 742.5,458.5 744.5,459.5 745.5,458.5 746.5,460.5 747.5,458.5 748.5,460.5 749.5,459.5 750.5,461.5 753.5,461.5 755.5,462.5 757.5,464.5 758.5,472.0 761.5,435.7 762.5,466.1 764.5,449.7 765.5,461.0 766.5,452.5 768.5,461.9 769.5,454.5 770.5,457.5 772.0,454.7 773.5,458.5 775.0,455.5 776.5,458.0 778.0,455.0 779.5,458.5 781.5,458.5 782.5,456.0 783.5,458.5 787.5,458.5 788.5,458.5 789.5,457.5 790.5,458.5 791.5,459.5 792.5,458.5 793.5,460.0 794.5,458.5 795.5,460.5 799.5,458.5 800.5,458.5 801.5,460.0 802.5,458.5 803.5,460.5 804.5,458.5 805.5,457.5 806.5,458.5 807.5,459.5 808.5,458.5 809.5,460.0 810.5,458.5 811.5,460.5 812.5,458.5 813.5,457.5 814.5,458.5 815.5,459.5 816.5,458.5 817.5,460.0 818.5,458.5 819.5,460.5 820.5,458.5 821.5,457.5 822.5,458.5 823.5,459.5 824.5,458.5 825.5,460.0 826.5,458.5 827.5,460.5 832.5,458.5 833.5,460.0 834.5,458.5 835.5,460.5 836.5,458.5 837.5,457.5 838.5,458.5 838.5,458.5 840.5,459.5 841.5,458.5 842.5,460.5 843.5,458.5 844.5,460.5 845.5,459.5 846.5,461.5 849.5,461.5 851.5,462.5 853.5,464.5 854.5,480.0 856.5,442.6 857.5,467.2 859.5,452.5 860.5,461.0 861.5,453.6 863.5,462.4 864.5,454.5 865.5,457.5 867.0,455.0 868.5,458.5 870.0,455.5 871.5,458.0 873.0,455.0 874.5,458.5 880.5,458.5 881.3,455.0 882.5,458.5 883.5,460.5 884.5,458.5 885.5,457.5 886.5,458.5 887.5,459.5 903.5,458.5 904.5,456.5 905.5,458.5 919.5,458.5 920.5,458.5 921.5,460.0 922.5,458.5 923.5,460.5 924.5,458.5 925.5,457.5 926.5,458.5 927.5,459.5 928.5,458.5 929.5,460.0 930.5,458.5 931.5,460.5 932.5,458.5 933.5,457.5 934.5,458.5 934.5,458.5 936.5,459.5 937.5,458.5 938.5,460.5 939.5,458.5 940.5,460.5 941.5,459.5 942.5,461.5 945.5,461.5 947.5,462.5 949.5,464.5 950.5,472.0 952.5,431.6 953.5,465.6 955.5,446.6 956.5,461.0 957.5,452.4 959.5,461.8 960.5,454.5 961.5,457.5 963.0,455.4 964.5,458.5 966.0,455.5 967.5,458.0 969.0,455.0 970.5,458.5 972.5,458.5 973.5,456.0 974.5,458.5 978.5,458.5 994.5,458.5 995.5,460.5 996.5,458.5 997.5,457.5 998.5,458.5 999.5,459.5 1000.5,458.5 1001.5,460.0 1002.5,458.5 1003.5,460.5 1004.5,458.5 1005.5,457.5 1006.5,458.5 1007.5,459.5 1008.5,458.5 1009.5,460.0 1010.5,458.5 1011.5,460.5 1012.5,458.5 1013.5,457.5 1014.5,458.5 1015.5,459.5 1016.5,458.5 1017.5,460.0 1018.5,458.5 1019.5,460.5 1020.5,458.5 1021.5,457.5 1022.5,458.5 1023.5,459.5 1024.5,458.5 1025.5,460.0 1026.5,458.5 1027.5,460.5 1028.5,458.5 1029.5,457.5 1030.5,458.5 1030.5,458.5 1032.5,459.5 1033.5,458.5 1034.5,460.5 1035.5,458.5 1036.5,460.5 1037.5,459.5 1038.5,461.5 1041.5,461.5 1043.5,462.5 1045.5,464.5 1046.5,476.4 1047.5,431.6 1048.5,467.0 1050.5,448.0 1051.5,461.0 1052.5,453.5 1054.5,461.6 1055.5,454.5 1056.5,457.5 1058.0,455.4 1059.5,458.5 1061.0,455.5 1062.5,458.0 1064.0,455.0 1065.5,458.5 1071.5,458.5 1072.3,455.0 1073.5,458.5 1086.5,458.5 1087.5,460.5 1088.5,458.5 1126.5,458.5 1128.5,459.5 1129.5,458.5 1130.5,460.5 1131.5,458.5 1132.5,460.5 1133.5,459.5 1134.5,461.5 1137.5,461.5 1139.5,462.5 1141.5,464.5 1142.5,480.0 1143.5,440.4 1144.5,466.6 1146.5,450.8 1147.5,461.0 1148.5,453.6 1150.5,462.2 1151.5,454.5 1152.5,457.5 1154.0,455.4 1155.5,458.5 1157.0,455.5 1158.5,458.0 1160.0,455.0 1161.5,458.5 1167.5,458.5 1168.3,455.0 1169.5,458.5 1221.5,458.5 1223.5,459.5 1224.5,458.5 1225.5,460.5 1226.5,458.5 1227.5,460.5 1228.5,459.5 1229.5,461.5 1232.5,461.5 1234.5,462.5 1236.5,464.5 1237.5,472.0 1238.5,428.7 1239.5,466.3 1241.5,446.5 1242.5,461.0 1243.5,453.5 1245.5,462.5 1246.5,454.5 1247.5,457.5 1249.0,454.7 1250.5,458.5 1252.0,455.5 1253.5,458.0 1255.0,455.0 1256.5,458.5 1258.5,458.5 1259.5,456.0 1260.5,458.5 1260.5,458.5" fill="none" stroke="#a8ffff" stroke-width="1" shape-rendering="auto"/><text x="149" y="467" font-family="Liberation Sans,sans-serif" font-size="12.5" fill="#a8ffff" shape-rendering="auto">1</text><rect x="156" y="462" width="5" height="1" fill="#a8ffff"/><path d="M160 458.5L167 462.5L160 466.5Z" fill="#a8ffff" shape-rendering="auto"/><rect x="372.5" y="708.5" width="11" height="11" fill="none" stroke="#d0d0d0" stroke-dasharray="1 1.5"/><rect x="372.5" y="720.5" width="11" height="11" fill="#000" stroke="#d0d0d0"/><text x="378" y="730" text-anchor="middle" font-family="Liberation Sans,sans-serif" font-size="10.5" fill="#e0e0e0" shape-rendering="auto">A</text><rect x="395.5" y="708.5" width="11" height="11" fill="#000" stroke="#d0d0d0"/><text x="401" y="718" text-anchor="middle" font-family="Liberation Sans,sans-serif" font-size="10.5" fill="#e0e0e0" shape-rendering="auto">B</text><rect x="395.5" y="720.5" width="11" height="11" fill="none" stroke="#d0d0d0" stroke-dasharray="1 1.5"/></svg></div>
<div class="a" style="left:1261px;top:72px;width:17px;height:661px;background:linear-gradient(to right,#fbfbf8,#f3f2ea);"></div>
<div class="a" style="left:1263px;top:73px;width:14px;height:15px;border-radius:2px;background:linear-gradient(135deg,#cbd9fc,#b6c9f7);border:1px solid #e4ebfd;box-shadow:1px 1px 0 #9db0dc;"></div><svg class="a" style="left:1263px;top:73px" width="14" height="15" viewBox="-7.0 -7.5 14 15"><path d="M-3.500 2l3.500-3.500 3.500 3.500" fill="none" stroke="#42567f" stroke-width="2"/></svg>
<div class="a" style="left:1263px;top:717px;width:14px;height:15px;border-radius:2px;background:linear-gradient(135deg,#cbd9fc,#b6c9f7);border:1px solid #e4ebfd;box-shadow:1px 1px 0 #9db0dc;"></div><svg class="a" style="left:1263px;top:717px" width="14" height="15" viewBox="-7.0 -7.5 14 15"><path d="M-3.500 -1.500l3.500 3.500 3.500-3.500" fill="none" stroke="#42567f" stroke-width="2"/></svg>
<div class="a" style="left:1263px;top:404px;width:14px;height:16px;border-radius:2px;background:linear-gradient(135deg,#cbd9fc,#b6c9f7);border:1px solid #e4ebfd;box-shadow:1px 1px 0 #9db0dc;"></div>
<div class="a" style="left:1267px;top:408px;width:6px;height:1px;background:#eef3ff;box-shadow:0 2px 0 #eef3ff,0 4px 0 #eef3ff,0 6px 0 #eef3ff"></div>
<div class="a" style="left:146px;top:733px;width:1115px;height:18px;background:linear-gradient(to bottom,#fdfdfb,#f3f2ea);"></div>
<div class="a" style="left:147px;top:735px;width:15px;height:14px;border-radius:2px;background:linear-gradient(135deg,#cbd9fc,#b6c9f7);border:1px solid #e4ebfd;box-shadow:1px 1px 0 #9db0dc;"></div><svg class="a" style="left:147px;top:735px" width="15" height="14" viewBox="-7.5 -7.0 15 14"><path d="M1.500 -3.500l-3.500 3.500 3.500 3.500" fill="none" stroke="#42567f" stroke-width="2"/></svg>
<div class="a" style="left:1244px;top:735px;width:15px;height:14px;border-radius:2px;background:linear-gradient(135deg,#cbd9fc,#b6c9f7);border:1px solid #e4ebfd;box-shadow:1px 1px 0 #9db0dc;"></div><svg class="a" style="left:1244px;top:735px" width="15" height="14" viewBox="-7.5 -7.0 15 14"><path d="M-1.500 -3.500l3.500 3.500-3.500 3.500" fill="none" stroke="#42567f" stroke-width="2"/></svg>
<div class="a" style="left:164px;top:735px;width:7px;height:14px;border-radius:2px;background:linear-gradient(135deg,#cbd9fc,#b6c9f7);border:1px solid #e4ebfd;box-shadow:1px 1px 0 #9db0dc;"></div>
<div class="a" style="left:1261px;top:733px;width:19px;height:18px;background:#ece9d8"></div>
<div class="a" style="left:414px;top:520px;width:229px;height:93px;background:#0a3fd0;border-radius:3px 3px 0 0;border:1px solid #0831a8;"></div>
<div class="a" style="left:415px;top:521px;width:227px;height:20px;background:linear-gradient(to bottom,#3a8af5 0px,#0d5de8 3px,#0652dc 9px,#0550da 14px,#0a5ce8 18px,#0a52d6 20px);border-radius:2px 2px 0 0;"></div>
<div class="a" style="left:418px;top:525px;font-family:'DejaVu Sans','Liberation Sans',sans-serif;font-weight:bold;font-size:11px;line-height:16px;color:#fff;white-space:nowrap;letter-spacing:-0.6px;">CA6 x 2</div>
<div class="a" style="left:610px;top:525px;width:13px;height:13px;border-radius:2px;background:linear-gradient(135deg,#d5e0fb,#b4c6f4);border:1px solid #e8eefc;"></div>
<svg class="a" style="left:610px;top:525px" width="13" height="13" viewBox="0 0 13 13"><path d="M3.500 5l3 3 3-3" fill="none" stroke="#3c507e" stroke-width="1.800"/></svg>
<div class="a" style="left:625px;top:525px;width:13px;height:13px;border-radius:2px;background:linear-gradient(135deg,#e47a58,#cf4420);border:1px solid #f3e5de;"></div>
<svg class="a" style="left:625px;top:525px" width="13" height="13" viewBox="0 0 13 13"><path d="M3.500 3.500l6 6M9.500 3.500l-6 6" fill="none" stroke="#fff" stroke-width="1.800"/></svg>
<div class="a" style="left:417px;top:541px;width:223px;height:69px;background:#ece9d8;border-top:1px solid #f8f8f0;border-left:1px solid #f8f8f0"></div>
<div class="a" style="left:420px;top:544px;width:22px;height:25px;background:#dcfcd9;border-left:1px solid #a5a595;border-top:1px solid #a5a595;border-right:1px solid #fff;border-bottom:1px solid #fff;"></div>
<div class="a" id="one" style="left:423px;top:540px;font-size:32px;line-height:34px;transform:scaleX(0.85);transform-origin:0 0;-webkit-text-stroke:0.6px #000;">1</div>
<div class="a" style="left:445px;top:551px;font-family:'DejaVu Sans',sans-serif;font-weight:bold;font-size:15px;line-height:18px;">A:</div>
<div class="a" style="left:428px;top:581px;font-family:'DejaVu Sans',sans-serif;font-weight:bold;font-size:15px;line-height:18px;white-space:nowrap">A-B:</div>
<div class="a" style="left:467px;top:542px;width:172px;height:31px;background:#dcfcd9;border-left:1px solid #a5a595;border-top:1px solid #c8c8b8;border-right:2px solid #f4fff4;"></div>
<div class="a" style="left:467px;top:574px;width:172px;height:33px;background:#dcfcd9;border-left:1px solid #a5a595;border-top:1px solid #a5a595;border-right:2px solid #f4fff4;border-bottom:1px solid #fff"></div>
<div class="a" id="big1" style="left:498px;top:539px;font-size:33px;line-height:36px;white-space:nowrap;transform:scaleX(0.99);transform-origin:0 0;-webkit-text-stroke:0.35px #000;">1.026 A</div>
<div class="a" id="big2" style="left:491px;top:572px;font-size:33px;line-height:36px;white-space:nowrap;transform:scaleX(1.0);transform-origin:0 0;-webkit-text-stroke:0.35px #000;">-0.879 A</div>
<div class="a" style="left:499px;top:565px;width:7px;height:4px;background:#dcfcd9"></div><div class="a" style="left:510px;top:565px;width:6px;height:4px;background:#dcfcd9"></div><div class="a" style="left:423px;top:565px;width:6px;height:3px;background:#dcfcd9"></div><div class="a" style="left:433px;top:565px;width:5px;height:3px;background:#dcfcd9"></div>
<div class="a" style="left:0;top:750px;width:1280px;height:1px;background:#aca899"></div><div class="a" style="left:0;top:751px;width:1280px;height:1px;background:#fff"></div>
<div class="a" style="left:1px;top:755px;font-size:11px;line-height:14px;white-space:nowrap">Připraven</div>
<div class="a" id="stat2" style="left:944px;top:755px;font-size:11px;line-height:14px;white-space:nowrap;width:292px;overflow:hidden;">Čas celkem: 00:00:00:700.232, Aktuální čas: 00:00:00:000.000</div>
<div class="a" style="left:1242px;top:755px;font-size:11px;line-height:14px;white-space:nowrap">11.3</div>
<div id="taskbar"></div>
<div class="a" style="left:0;top:770px;width:98px;height:30px;background:linear-gradient(to bottom,#5ab55a 0px,#3f9a3f 3px,#3a963a 10px,#379237 20px,#2e842e 27px,#2a7a2a 30px);border-radius:0 12px 12px 0/0 15px 15px 0;box-shadow:inset -3px 0 4px rgba(20,80,20,0.600);"></div>
<svg class="a" style="left:10px;top:775px" width="22" height="20" viewBox="0 0 22 20"><path d="M2.500 3.500c3-2.500 5-1.500 7 0l-1.500 5.500c-2-1.500-4-2-7 0z" fill="#e8622a"/><path d="M10.500 4c2 1.500 4 2 7 0l-1.500 5.500c-3 2-5 1.500-7 0z" fill="#8cc63f"/><path d="M0.700 10c3-2 5-1.500 7 0l-1.500 5.500c-2-1.500-4-2-7 0z" fill="#4a8be8"/><path d="M8.700 10.500c2 1.500 4 2 7 0l-1.500 5.500c-3 2-5 1.500-7 0z" fill="#f2c531"/></svg>
<div class="a" style="left:34px;top:774px;font-weight:bold;font-style:italic;font-size:18px;line-height:22px;color:#fff;text-shadow:1px 1px 1px rgba(0,0,0,0.500);">Start</div>
<div class="a" style="left:109px;top:774px;width:158px;height:23px;border-radius:3px;background:linear-gradient(to bottom,#5a96f8 0px,#3f82f2 3px,#3c7ff0 18px,#3676e6 23px);box-shadow:inset 0 0 0 1px rgba(255,255,255,0.120);"></div>
<svg class="a" style="left:119px;top:775px" width="14" height="18" viewBox="0 0 14 18"><path d="M1.500 1.500l3.500 10" stroke="#5a3a2a" stroke-width="2.200"/><path d="M1.200 1.200l0.800 2" stroke="#e8e0d0" stroke-width="2"/><path d="M5.500 3.500l1 10" stroke="#c8d020" stroke-width="2.400"/><path d="M5.300 2.500l0.300 2" stroke="#f4f4e0" stroke-width="1.800"/><path d="M3.500 8l1.500 6" stroke="#3a8a2a" stroke-width="1.800"/><path d="M11 3l-3 10" stroke="#e890a8" stroke-width="2.400"/><path d="M11.500 6l-2 7" stroke="#a03040" stroke-width="1.300"/><path d="M2.500 9h9.500l-2 8h-5z" fill="#f0c060" fill-opacity="0.550" stroke="#f4f4ff" stroke-opacity="0.700" stroke-width="0.800"/><path d="M5 16.500h4.500" stroke="#fff" stroke-width="1.300"/><path d="M3.200 10l1.500 6" stroke="#fff" stroke-opacity="0.800" stroke-width="1"/></svg>
<div class="a" style="left:138px;top:779px;font-size:11px;line-height:14px;color:#fff;white-space:nowrap;letter-spacing:-0.25px;">DC proud článek 1.JP…</div>
<div class="a" style="left:269px;top:774px;width:158px;height:24px;border-radius:3px;background:linear-gradient(to bottom,#1a4aa8 0px,#1f55bd 4px,#2059c4 20px,#2560cf 24px);box-shadow:inset 1px 1px 1px rgba(0,0,20,0.350);"></div>
<svg class="a" style="left:279px;top:778px" width="16" height="16" viewBox="0 0 16 16"><rect x="0.500" y="0.500" width="15" height="15" fill="#10e010" stroke="#000"/><rect x="1.500" y="1.500" width="13" height="13" fill="none" stroke="#60ff60"/><path d="M2.500 6.500h2v-3h2v3h3v-3h2v3h2M2.500 11.500h1v-1h1v1h2v-2h1v2h2v-1h1v1h1v-2h1v2" fill="none" stroke="#b0ffb0"/></svg>
<div class="a" style="left:299px;top:779px;font-size:11px;line-height:14px;color:#fff;white-space:nowrap;letter-spacing:-0.2px;">:.TEXVIK&nbsp; signal recor…</div>
<div class="a" style="left:1008px;top:778px;font-size:11px;line-height:14px;color:#fff;">CS</div>
<div class="a" style="left:1044px;top:770px;width:236px;height:30px;background:linear-gradient(to bottom,#3aa5f5 0px,#1a92ee 3px,#1690ec 10px,#138ce9 22px,#0f7fd8 28px,#0d6fc2 30px);border-left:1px solid #0a5cbc;box-shadow:inset 1px 0 0 #3fb0f8;"></div>
<svg class="a" style="left:1053px;top:776px" width="18" height="18" viewBox="0 0 18 18"><rect x="1.500" y="3.500" width="8" height="8" fill="#2c2c6c" stroke="#c8d0f0"/><path d="M1 12.500h9l1 2h-11z" fill="#e8c8e8"/><path d="M10 3c1.500 1.500 1.500 4 0 5.500M12.500 1.500c2.500 2.500 2.500 6.500 0 9" fill="none" stroke="#f4f4f4" stroke-width="1.300"/><path d="M9.5 10l6 6M15.5 10l-6 6" stroke="#e02020" stroke-width="2.200" fill="none"/></svg>
<svg class="a" style="left:1071px;top:776px" width="18" height="18" viewBox="0 0 18 18"><rect x="7.500" y="1.500" width="6" height="6" fill="#2c2c6c" stroke="#c8d0f0"/><rect x="1.500" y="5.500" width="7" height="7" fill="#2c2c6c" stroke="#c8d0f0"/><path d="M1 13h9l1 2h-11z" fill="#e8c8e8"/><path d="M9.5 9l6 6M15.5 9l-6 6" stroke="#e02020" stroke-width="2.200" fill="none"/></svg>
<svg class="a" style="left:1090px;top:776px" width="18" height="18" viewBox="0 0 18 18"><defs><radialGradient id="sp" cx="0.400" cy="0.400" r="0.700"><stop offset="0" stop-color="#f0f0f0"/><stop offset="0.450" stop-color="#909090"/><stop offset="1" stop-color="#404040"/></radialGradient></defs><ellipse cx="6" cy="7.500" rx="5.500" ry="6" fill="url(#sp)"/><ellipse cx="5.500" cy="7" rx="2" ry="2.200" fill="#6a5a5a"/><path d="M9 13l2 3 5-8" fill="none" stroke="#9cc8ff" stroke-width="1.500"/></svg>
<svg class="a" style="left:1108px;top:776px" width="16" height="18" viewBox="0 0 16 18"><path d="M0.500 5l5-4.500v2.500h4v4.500h-4v2.500z" fill="#30c030" stroke="#108010" stroke-width="0.600"/><path d="M3.500 10.500l8-4 3 4.500-7.500 4.500z" fill="#b8b8c0" stroke="#606068"/><path d="M6 10.500l5-2.500 1.500 2-5 2.500z" fill="#404048"/></svg>
<svg class="a" style="left:1125px;top:776px" width="18" height="18" viewBox="0 0 18 18"><path d="M1.500 1.500c0 5 1.500 9 6 12" fill="none" stroke="#101010" stroke-width="2.800"/><path d="M1.500 1.500c0 5 1.500 9 6 12" fill="none" stroke="#f4f4f4" stroke-width="1.300"/><path d="M14 2c0 5-2 9-7 12" fill="none" stroke="#101010" stroke-width="3.200"/><path d="M14 2c0 5-2 9-7 12" fill="none" stroke="#40e0f0" stroke-width="1.800"/><path d="M10 12.500l4 2.500" stroke="#000" stroke-width="3.500"/><path d="M10.500 12.800l3.500 2" stroke="#f0e020" stroke-width="1.600"/></svg>
<svg class="a" style="left:1144px;top:776px" width="18" height="18" viewBox="0 0 18 18"><path d="M1.500 6.500c4-5 10-5 14 0l-2 2c-3-3.500-7-3.500-10 0z" fill="#fff" stroke="#b02020" stroke-width="0.800"/><path d="M4 9.500c2.500-3 6.500-3 9 0l-1.800 2c-1.500-2-4-2-5.500 0z" fill="#fff" stroke="#b02020" stroke-width="0.800"/><path d="M5.500 11l2.500-1.500 1.500 1.500-1 5.500h-2z" fill="#fff"/><path d="M7.5 9.5l6 6M14.5 9.5l-6 6" stroke="#e02020" stroke-width="2.200" fill="none"/></svg>
<svg class="a" style="left:1163px;top:777px" width="14" height="16" viewBox="0 0 14 16"><rect x="1" y="1" width="12" height="10" fill="#c8c4cc" stroke="#202060" stroke-width="1.200"/><rect x="0.500" y="12" width="6" height="3" fill="#fff" stroke="#202060" stroke-width="0.800"/><rect x="7.500" y="12" width="6" height="3" fill="#fff" stroke="#202060" stroke-width="0.800"/></svg>
<svg class="a" style="left:1181px;top:778px" width="14" height="14" viewBox="0 0 14 14"><rect x="3" y="1" width="10" height="12" fill="#1030c0"/><rect x="1" y="4" width="3" height="9" fill="#e02020"/><path d="M4 9l4 0 0 4-4 0z" fill="#e02020"/><text x="3" y="12.500" font-family="Liberation Sans,sans-serif" font-weight="bold" font-size="14" fill="#000">R</text></svg>
<svg class="a" style="left:1200px;top:776px" width="12" height="17" viewBox="0 0 12 17"><ellipse cx="6" cy="8.500" rx="5" ry="7.500" fill="#1040d0"/><path d="M3 5.500l6 6-3 3v-12l3 3-6 6" fill="none" stroke="#fff" stroke-width="1.200"/></svg>
<svg class="a" style="left:1217px;top:776px" width="13" height="17" viewBox="0 0 13 17"><path d="M6.500 1c2 1.500 4 2 6 2 0 6-1.500 10-6 13-4.500-3-6-7-6-13 2 0 4-0.500 6-2z" fill="#d82828" stroke="#f0b0b0" stroke-width="0.800"/><path d="M4.500 6l4 4M8.500 6l-4 4" stroke="#fff" stroke-width="1.500"/></svg>
<div class="a" style="left:1239px;top:778px;font-size:11px;line-height:14px;color:#fff;">16:00</div>
</body>
</html>
